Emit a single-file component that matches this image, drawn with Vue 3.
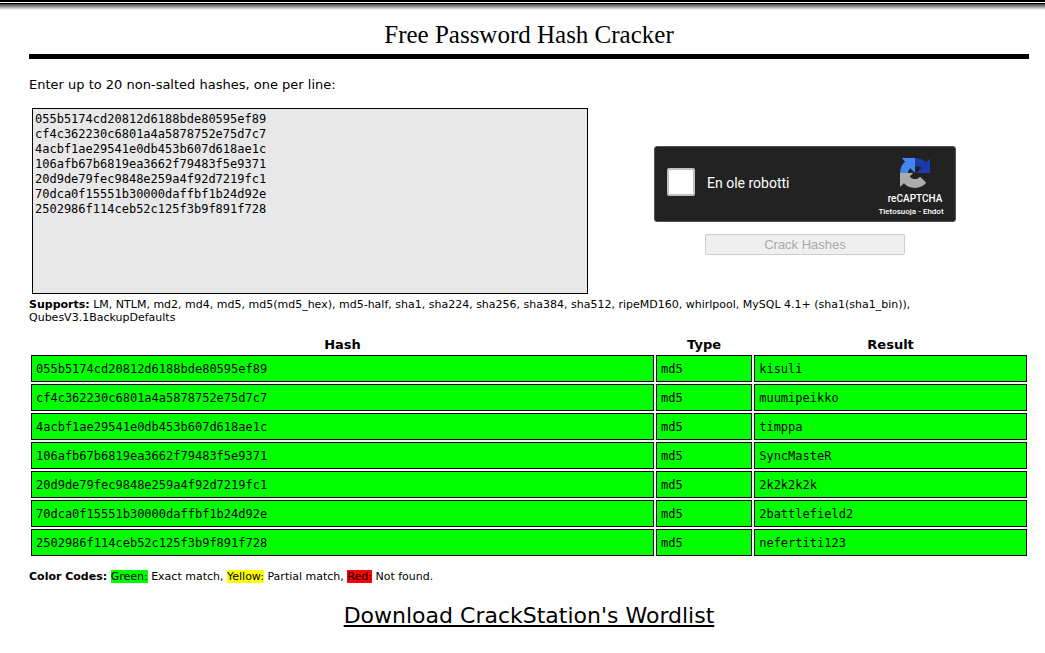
<script setup>
import { ref } from 'vue'

const results = [
  { hash: '055b5174cd20812d6188bde80595ef89', type: 'md5', result: 'kisuli' },
  { hash: 'cf4c362230c6801a4a5878752e75d7c7', type: 'md5', result: 'muumipeikko' },
  { hash: '4acbf1ae29541e0db453b607d618ae1c', type: 'md5', result: 'timppa' },
  { hash: '106afb67b6819ea3662f79483f5e9371', type: 'md5', result: 'SyncMasteR' },
  { hash: '20d9de79fec9848e259a4f92d7219fc1', type: 'md5', result: '2k2k2k2k' },
  { hash: '70dca0f15551b30000daffbf1b24d92e', type: 'md5', result: '2battlefield2' },
  { hash: '2502986f114ceb52c125f3b9f891f728', type: 'md5', result: 'nefertiti123' },
]
const hashes = ref(results.map((r) => r.hash).join('\n'))
const human = ref(false)
</script>

<template>
  <div class="page">
    <div class="topbar"></div>
    <main>
      <h1>Free Password Hash Cracker</h1>
      <form @submit.prevent>
        <label class="intro" for="hashes">Enter up to 20 non-salted hashes, one per line:</label>
        <div class="entry">
          <textarea id="hashes" v-model="hashes" spellcheck="false"></textarea>
          <div class="verify">
            <div class="captcha">
              <input id="human" v-model="human" type="checkbox" />
              <label for="human">En ole robotti</label>
              <div class="brand">
                <svg width="30" height="30" viewBox="0 0 64 64" aria-hidden="true">
                  <path fill="#1c3aa9" d="M32 0C42 0 50 4 56 9L64 1V32H35L46 21C42 18 37 17 32 18Z" />
                  <path fill="#4285f4" d="M32 0H4L11 8C4 14 0 22 0 32H17C17 28 19 25 22 22L32 32Z" />
                  <path fill="#ababab" d="M0 32V62L8 54C14 60 22 64 32 64C42 64 50 60 56 53L43 40C40 43 36 45 32 45C27 45 23 43 21 39L28 32Z" />
                </svg>
                <span class="name">reCAPTCHA</span>
                <span class="terms"><a href="#">Tietosuoja</a> - <a href="#">Ehdot</a></span>
              </div>
            </div>
            <button type="submit" disabled>Crack Hashes</button>
          </div>
        </div>
      </form>
      <p class="supports">
        <strong>Supports:</strong> <span>LM, NTLM, md2, md4, md5, md5(md5_hex), md5-half, sha1, sha224, sha256, sha384, sha512, ripeMD160, whirlpool, MySQL 4.1+ (sha1(sha1_bin)),</span> <span>QubesV3.1BackupDefaults</span>
      </p>
      <table>
        <thead>
          <tr>
            <th class="hash">Hash</th>
            <th class="type">Type</th>
            <th>Result</th>
          </tr>
        </thead>
        <tbody>
          <tr v-for="r in results" :key="r.hash">
            <td>{{ r.hash }}</td>
            <td>{{ r.type }}</td>
            <td>{{ r.result }}</td>
          </tr>
        </tbody>
      </table>
      <p class="codes">
        <strong>Color Codes:</strong> <span class="green">Green:</span> Exact match, <span class="yellow">Yellow:</span> Partial match, <span class="red">Red:</span> Not found.
      </p>
      <p class="download"><a href="#">Download CrackStation's Wordlist</a></p>
    </main>
  </div>
</template>

<style>
body {
  margin: 0;
  background: #fff;
}
</style>

<style scoped>
.page {
  color: #000;
  font-family: Verdana, "DejaVu Sans", sans-serif;
  font-size: 13px;
}
.topbar {
  height: 10px;
  background: linear-gradient(#000 0 2px, #fff 2px 3px, #000 3px 4px, #444 4px, #fff 10px);
}
main {
  padding: 8px 16px 0 29px;
}
h1 {
  margin: 0 0 18px;
  padding-bottom: 2px;
  border-bottom: 5px solid #000;
  font-family: "Times New Roman", "Liberation Serif", serif;
  font-size: 25px;
  font-weight: 400;
  line-height: 34px;
  text-align: center;
}
.intro {
  display: block;
  margin-bottom: 15px;
  line-height: 16px;
}
.entry {
  display: grid;
  grid-template-columns: 556px 1fr;
  padding-left: 3px;
}
textarea {
  box-sizing: border-box;
  height: 186px;
  margin: 0;
  padding: 3px 2px;
  border: 1px solid #000;
  border-radius: 0;
  outline: 0;
  resize: none;
  background: #e8e8e8;
  color: #000;
  font-family: "DejaVu Sans Mono", monospace;
  font-size: 12px;
  line-height: 15px;
}
.verify {
  display: flex;
  flex-direction: column;
  align-items: center;
  justify-content: center;
  gap: 12px;
  padding: 0 7px 2px 0;
}
.captcha {
  box-sizing: border-box;
  display: flex;
  align-items: center;
  width: 302px;
  height: 76px;
  padding-left: 12px;
  border: 1px solid #525252;
  border-radius: 3px;
  background: #222;
  color: #fff;
  font-family: Roboto, sans-serif;
  font-size: 14px;
}
.captcha input {
  appearance: none;
  box-sizing: border-box;
  width: 28px;
  height: 28px;
  margin: 0 12px 4px 0;
  border: 2px solid #c1c1c1;
  border-radius: 2px;
  background: #fff;
}
.captcha > label {
  flex: 1;
  padding-bottom: 2px;
}
.brand {
  display: flex;
  flex-direction: column;
  align-items: center;
  width: 80px;
  padding-top: 8px;
}
.name {
  margin-top: 4px;
  font-size: 10px;
  font-weight: 500;
  line-height: 14px;
}
.terms {
  padding-right: 8px;
  font-size: 8px;
  font-weight: 500;
  line-height: 11px;
}
.terms a {
  color: inherit;
  text-decoration: none;
}
button {
  box-sizing: border-box;
  width: 200px;
  height: 21px;
  padding: 0;
  border: 1px solid #cdcdcd;
  border-radius: 2px;
  background: #efefef;
  color: #aaa;
  font-family: Arial, "Liberation Sans", sans-serif;
  font-size: 13px;
}
p {
  margin: 0;
}
.supports {
  padding: 4px 80px 0 0;
  font-size: 11px;
  line-height: 13px;
}
table {
  width: 100%;
  margin-top: 10px;
  border-spacing: 2px;
  table-layout: fixed;
}
th {
  padding: 0;
  font-size: 13px;
  line-height: 17px;
}
.hash {
  width: 62.8%;
}
.type {
  width: 9.7%;
}
td {
  padding: 6px 4px 4px;
  border: 1px solid #000;
  background: #0f0;
  font-family: "DejaVu Sans Mono", monospace;
  font-size: 12px;
  line-height: 15px;
}
.codes {
  margin-top: 12px;
  font-size: 11px;
  line-height: 14px;
}
.green {
  background: #0f0;
}
.yellow {
  background: #ff0;
}
.red {
  background: #f00;
}
.download {
  margin-top: 18px;
  font-size: 22px;
  line-height: 28px;
  text-align: center;
}
.download a {
  color: #000;
}
</style>
